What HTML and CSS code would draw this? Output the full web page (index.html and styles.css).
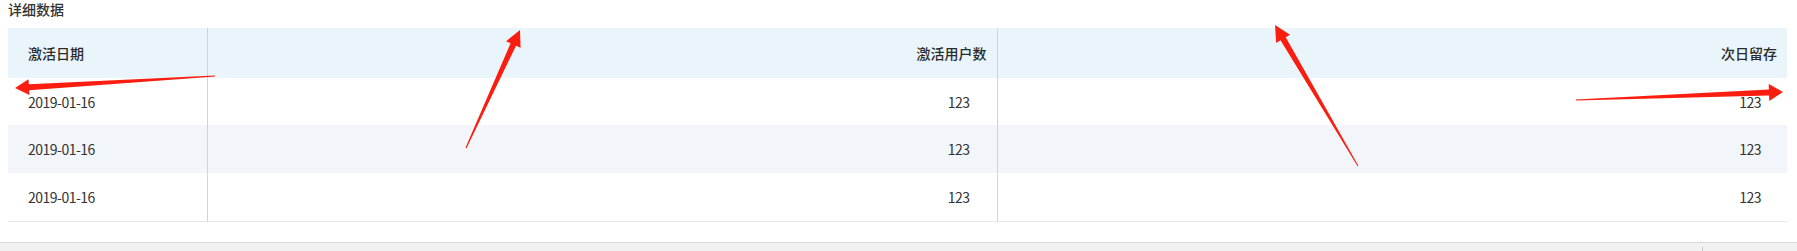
FILE: index.html
```html
<!DOCTYPE html>
<html lang="zh-CN">
<head>
<meta charset="utf-8">
<title>详细数据</title>
<link rel="stylesheet" href="styles.css">
</head>
<body>
<div class="page">
  <div class="panel">
    <div class="panel-title">详细数据</div>
    <table class="data-table">
      <colgroup>
        <col class="col-date">
        <col class="col-num">
        <col class="col-num">
      </colgroup>
      <thead>
        <tr>
          <th class="left">激活日期</th>
          <th class="right">激活用户数</th>
          <th class="right last">次日留存</th>
        </tr>
      </thead>
      <tbody>
        <tr>
          <td class="left">2019-01-16</td>
          <td class="right">123</td>
          <td class="right last">123</td>
        </tr>
        <tr class="stripe">
          <td class="left">2019-01-16</td>
          <td class="right">123</td>
          <td class="right last">123</td>
        </tr>
        <tr>
          <td class="left">2019-01-16</td>
          <td class="right">123</td>
          <td class="right last">123</td>
        </tr>
      </tbody>
    </table>
  </div>
  <div class="footer-bar"><span class="tick"></span></div>
</div>
<svg class="annotations" width="1797" height="251" viewBox="0 0 1797 251" xmlns="http://www.w3.org/2000/svg">
  <polygon points="215,75.5 28.8,84.2 28.5,79.2 15,88 29.45,95.1 29.15,90.15 215,76.5"/>
  <polygon points="465.5,147.8 510.6,43.25 506,41.2 520,30 520.6,47.8 516,45.75 466.5,148.2"/>
  <polygon points="1358.4,165.7 1285.7,37.3 1290,34.7 1275,25 1276.2,42.9 1280.5,40.3 1357.6,166.3"/>
  <polygon points="1576,99.5 1768.9,89.5 1768.7,84.05 1783,92 1769.3,101 1769.1,95.5 1576,100.5"/>
</svg>
</body>
</html>
```

FILE: styles.css
```css
html, body {
  margin: 0;
  padding: 0;
  background: #ffffff;
  overflow: hidden;
}

body {
  font-family: "Noto Sans CJK SC", "Noto Sans", sans-serif;
  font-size: 14px;
  color: #333333;
  position: relative;
  width: 1797px;
  height: 251px;
}

.page {
  display: flex;
  flex-direction: column;
  height: 251px;
}

.panel {
  padding: 0 10px 0 8px;
  flex: 1;
}

.panel-title {
  height: 20px;
  line-height: 18px;
  margin-bottom: 8px;
  font-size: 14px;
  font-weight: 500;
  color: #333333;
}

.data-table {
  width: 100%;
  table-layout: fixed;
  border-collapse: separate;
  border-spacing: 0;
}

.col-date {
  width: 200px;
}

.data-table th {
  height: 50px;
  box-sizing: border-box;
  background: #e9f5fb;
  font-weight: 500;
  color: #2b2b2b;
  padding: 0 10px 0 20px;
  border-right: 1px solid #d3d3d3;
}

.data-table td {
  height: 48px;
  box-sizing: border-box;
  padding: 0 27px 0 20px;
  color: #333333;
  letter-spacing: -0.5px;
  border-right: 1px solid #d3d3d3;
}

.data-table th.last,
.data-table td.last {
  border-right: none;
}

.data-table td.last {
  padding-right: 26px;
}

.data-table tbody tr:last-child td {
  border-bottom: 1px solid #e6e6e6;
  height: 49px;
}

.data-table tbody tr:first-child td {
  height: 47px;
}

.stripe td {
  background: #f2f6fa;
}

.left {
  text-align: left;
}

.right {
  text-align: right;
}

.footer-bar {
  height: 8px;
  background: #f1f1f1;
  border-top: 1px solid #d9d9d9;
  display: flex;
  justify-content: flex-end;
  align-items: flex-end;
}

.tick {
  width: 1px;
  height: 4px;
  background: #c8c8c8;
  margin-right: 94px;
}

.annotations {
  position: absolute;
  top: 0;
  left: 0;
  pointer-events: none;
  fill: #fb1d0f;
}
```
